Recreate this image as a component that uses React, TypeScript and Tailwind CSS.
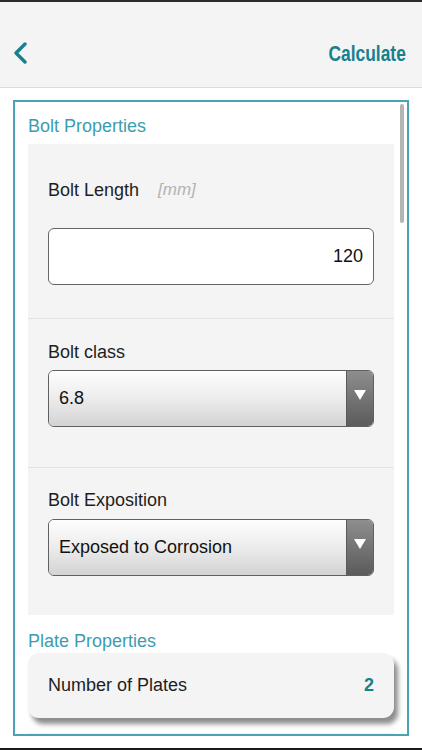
import React from "react";

const sans = { fontFamily: '"Liberation Sans", Arial, sans-serif' };

function Select({ value }: { value: string }) {
  return (
    <div className="flex h-[57px] w-full overflow-hidden rounded-[6px] border border-[#606060]">
      <div className="flex flex-1 items-center bg-gradient-to-b from-[#fefefe] via-[#ececec] to-[#d3d3d3] pl-[10px] text-[18px] text-[#111]">
        {value}
      </div>
      <div className="flex w-[27px] items-start justify-center border-l border-[#5a5a5a] bg-gradient-to-b from-[#8e8e8e] to-[#5b5b5b] pt-[19px]">
        <svg width="12" height="10" viewBox="0 0 12 10">
          <path d="M0 0 L12 0 L6 10 Z" fill="#fff" />
        </svg>
      </div>
    </div>
  );
}

export default function App() {
  return (
    <div className="relative h-[750px] w-[422px] overflow-hidden bg-white" style={sans}>
      <div className="h-[2px] bg-[#2a2a2a]" />
      <div className="flex h-[86px] items-center justify-between border-b border-[#dcdcdc] bg-[#f4f4f4] pl-[13px] pr-[16px] pt-[17px]">
        <svg width="16" height="22" viewBox="0 0 16 22">
          <path d="M12 2 L3 11 L12 20" fill="none" stroke="#17808f" strokeWidth="3.4" strokeLinecap="round" strokeLinejoin="round" />
        </svg>
        <span
          className="inline-block origin-right scale-x-[0.79] text-[22px] font-bold text-[#17808f]"
          style={{ fontFamily: '"Liberation Sans", Arial, sans-serif' }}
        >
          Calculate
        </span>
      </div>
      <div className="h-[12px]" />
      <div className="relative mx-[13px] h-[636px] overflow-hidden border-2 border-[#4aa3b3]">
        <div className="absolute right-[3px] top-[2px] h-[119px] w-[4px] rounded-full bg-[#b4b4b4]" />
        <div className="pl-[13px] pr-[13px]">
          <div className="pt-[13px] text-[18px] leading-[22px] text-[#3c9db0]">Bolt Properties</div>
          <div className="mt-[7px] w-[366px] bg-[#f4f4f4]">
            <div className="px-[20px] pb-[33px] pt-[35px]">
              <div className="flex items-center text-[18px] leading-[22px] text-[#1e1e1e]">
                Bolt Length
                <span className="ml-[19px] text-[17px] italic text-[#b3b3b3]">[mm]</span>
              </div>
              <div className="mt-[27px] flex h-[57px] items-center justify-end rounded-[6px] border border-[#666] bg-white pr-[10px] text-[18px] text-[#111]">
                120
              </div>
            </div>
            <div className="h-[1px] bg-[#e3e3e3]" />
            <div className="px-[20px] pb-[40px] pt-[22px]">
              <div className="text-[18px] leading-[22px] text-[#1e1e1e]">Bolt class</div>
              <div className="mt-[7px]">
                <Select value="6.8" />
              </div>
            </div>
            <div className="h-[1px] bg-[#e3e3e3]" />
            <div className="px-[20px] pb-[39px] pt-[21px]">
              <div className="text-[18px] leading-[22px] text-[#1e1e1e]">Bolt Exposition</div>
              <div className="mt-[8px]">
                <Select value="Exposed to Corrosion" />
              </div>
            </div>
          </div>
          <div className="pt-[15px] text-[18px] leading-[22px] text-[#3c9db0]">Plate Properties</div>
          <div className="mt-[1px] flex h-[65px] w-[366px] items-center justify-between rounded-[11px] bg-[#f4f4f4] pl-[20px] pr-[20px] shadow-[4px_6px_5px_rgba(0,0,0,0.45)]">
            <span className="text-[18px] text-[#1e1e1e]">Number of Plates</span>
            <span className="text-[18px] font-bold text-[#17808f]">2</span>
          </div>
          <div className="mt-[15px] h-[20px] w-[366px] bg-[#f4f4f4]" />
        </div>
      </div>
      <div className="absolute bottom-0 left-0 h-[2px] w-full bg-[#1a1a1a]" />
    </div>
  );
}
